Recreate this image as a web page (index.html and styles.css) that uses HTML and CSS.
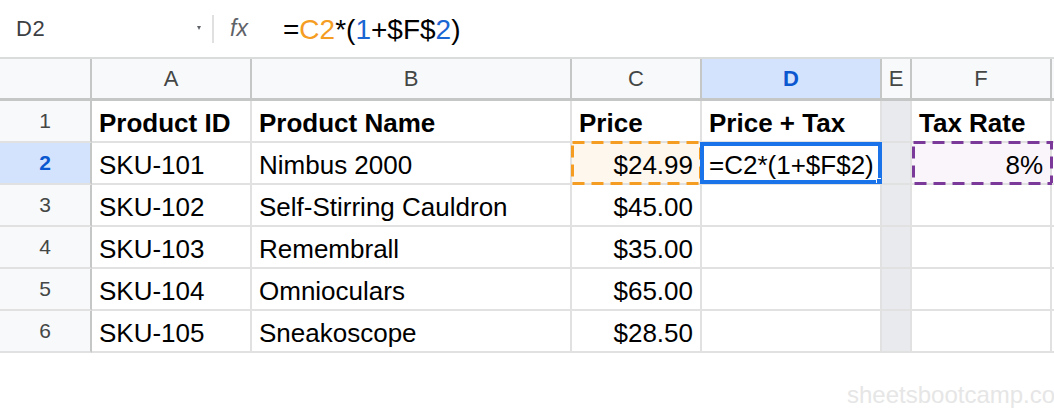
FILE: index.html
```html
<!DOCTYPE html>
<html>
<head>
<meta charset="utf-8">
<link rel="stylesheet" href="styles.css">
</head>
<body>
<div class="sheet">
  <div class="formula-bar">
    <div class="namebox"><span class="ref">D2</span><span class="caret"></span></div>
    <div class="sep"></div>
    <div class="fx">fx</div>
    <div class="formula">=<span class="f-orange">C2</span>*(<span class="f-blue">1</span>+$F$<span class="f-blue">2</span>)</div>
  </div>
  <div class="grid">
    <div class="hd corner"></div>
    <div class="hd col">A</div>
    <div class="hd col">B</div>
    <div class="hd col">C</div>
    <div class="hd col sel">D</div>
    <div class="hd col">E</div>
    <div class="hd col">F</div>
    <div class="hd col edge"></div>

    <div class="hd row">1</div>
    <div class="cell bold">Product ID</div>
    <div class="cell bold">Product Name</div>
    <div class="cell bold">Price</div>
    <div class="cell bold">Price + Tax</div>
    <div class="cell gray"></div>
    <div class="cell bold">Tax Rate</div>
    <div class="cell edge"></div>

    <div class="hd row sel">2</div>
    <div class="cell">SKU-101</div>
    <div class="cell">Nimbus 2000</div>
    <div class="cell num ref-orange">$24.99
      <svg class="dash" width="132" height="44" viewBox="0 0 132 44"><rect x="2.5" y="1.5" width="128" height="41" fill="none" stroke="#f59d22" stroke-width="3" stroke-dasharray="12 7"/></svg>
    </div>
    <div class="cell active">=C2*(1+$F$2)<span class="handle"></span></div>
    <div class="cell gray"></div>
    <div class="cell num ref-purple">8%
      <svg class="dash" width="141" height="44" viewBox="0 0 141 44"><rect x="1.5" y="1.5" width="138" height="41" fill="none" stroke="#7b3a99" stroke-width="3" stroke-dasharray="12 7"/></svg>
    </div>
    <div class="cell edge"></div>

    <div class="hd row">3</div>
    <div class="cell">SKU-102</div>
    <div class="cell">Self-Stirring Cauldron</div>
    <div class="cell num">$45.00</div>
    <div class="cell"></div>
    <div class="cell gray"></div>
    <div class="cell"></div>
    <div class="cell edge"></div>

    <div class="hd row">4</div>
    <div class="cell">SKU-103</div>
    <div class="cell">Remembrall</div>
    <div class="cell num">$35.00</div>
    <div class="cell"></div>
    <div class="cell gray"></div>
    <div class="cell"></div>
    <div class="cell edge"></div>

    <div class="hd row">5</div>
    <div class="cell">SKU-104</div>
    <div class="cell">Omnioculars</div>
    <div class="cell num">$65.00</div>
    <div class="cell"></div>
    <div class="cell gray"></div>
    <div class="cell"></div>
    <div class="cell edge"></div>

    <div class="hd row">6</div>
    <div class="cell">SKU-105</div>
    <div class="cell">Sneakoscope</div>
    <div class="cell num">$28.50</div>
    <div class="cell"></div>
    <div class="cell gray"></div>
    <div class="cell"></div>
    <div class="cell edge"></div>
  </div>
  <div class="watermark">sheetsbootcamp.co</div>
</div>
</body>
</html>
```

FILE: styles.css
```css
html, body {
  margin: 0;
  padding: 0;
  background: #ffffff;
}
body {
  width: 1054px;
  height: 414px;
  overflow: hidden;
  font-family: "Liberation Sans", Arial, sans-serif;
  color: #000;
}
.sheet {
  position: relative;
  width: 1054px;
  height: 414px;
}
.formula-bar {
  height: 57px;
  display: flex;
  align-items: center;
}
.namebox {
  width: 212px;
  display: flex;
  align-items: center;
  justify-content: space-between;
  padding-left: 16px;
  padding-right: 11px;
  box-sizing: border-box;
  height: 30px;
}
.ref {
  font-size: 22px;
  letter-spacing: 0.5px;
  color: #3c4043;
}
.caret {
  width: 0;
  height: 0;
  border-left: 2.5px solid transparent;
  border-right: 2.5px solid transparent;
  border-top: 4px solid #5f6368;
  margin-top: -2px;
}
.sep {
  width: 2px;
  height: 28px;
  background: #e0e0e0;
}
.fx {
  font-style: italic;
  font-size: 23px;
  color: #5f6368;
  margin-left: 16px;
  width: 53px;
}
.formula {
  font-size: 28px;
  color: #000;
  margin-top: 2px;
}
.f-orange { color: #f59d22; }
.f-blue { color: #1a66d2; }

.grid {
  display: grid;
  grid-template-columns: 92px 160px 320px 130px 180px 30px 140px 1fr;
  grid-template-rows: 42px repeat(6, 42px);
  border-top: 2px solid #dadcdc;
}
.hd {
  background: #f8f9fa;
  color: #444746;
  font-size: 22px;
  display: flex;
  align-items: center;
  justify-content: center;
  box-sizing: border-box;
}
.hd.col {
  border-right: 2px solid #c4c7c5;
  border-bottom: 3px solid #c4c7c5;
  padding-top: 1px;
}
.corner {
  border-right: 2px solid #c4c7c5;
  border-bottom: 3px solid #c4c7c5;
}
.hd.row {
  border-right: 2px solid #c4c7c5;
  border-bottom: 2px solid #e1e1e1;
  font-size: 21px;
}
.hd.sel {
  background: #d3e3fd;
  color: #0b57d0;
  font-weight: bold;
}
.hd.edge {
  border-right: none;
}
.cell {
  position: relative;
  box-sizing: border-box;
  border-right: 2px solid #e1e1e1;
  border-bottom: 2px solid #e1e1e1;
  font-size: 26px;
  line-height: 30px;
  display: flex;
  align-items: flex-end;
  padding: 0 7px 3px 7px;
  white-space: nowrap;
}
.cell.bold {
  font-weight: bold;
}
.cell.num {
  justify-content: flex-end;
}
.cell.gray {
  background: #e8eaed;
}
.cell.edge {
  border-right: none;
}
.ref-orange {
  background: #fef7ed;
}
.ref-purple {
  background: #faf5fb;
}
.dash {
  position: absolute;
  left: -2px;
  top: -2px;
  pointer-events: none;
}
.ref-purple .dash {
  left: 0;
}
.active {
  padding-left: 7px;
}
.active::after {
  content: "";
  position: absolute;
  left: -2px;
  top: -1px;
  right: -2px;
  bottom: -1px;
  border: 4px solid #1a73e8;
}
.handle {
  position: absolute;
  right: -1px;
  bottom: 0px;
  width: 4px;
  height: 4px;
  background: #1a73e8;
  border-left: 1px solid #fff;
  border-top: 1px solid #fff;
  z-index: 2;
}
.watermark {
  position: absolute;
  left: 847px;
  top: 381px;
  font-size: 24px;
  color: #e6e6e6;
  white-space: nowrap;
}
```
